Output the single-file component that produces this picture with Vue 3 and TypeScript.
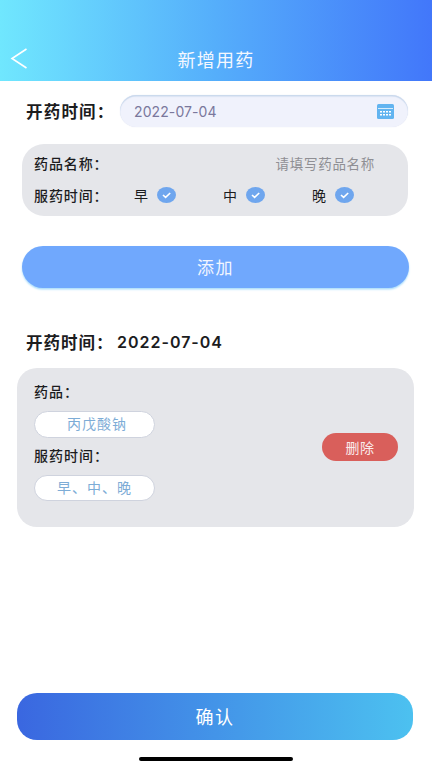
<script setup lang="ts">
const slots = ['早', '中', '晚']
</script>

<template>
  <div class="page">
    <header class="nav">
      <svg class="back" width="18" height="24" viewBox="0 0 18 24" fill="none">
        <path d="M16.5 2 L2 11.5 L16.5 21" stroke="#fff" stroke-width="1.6" />
      </svg>
      <span class="nav-title">新增用药</span>
    </header>

    <section class="date-row">
      <span class="date-label">开药时间：</span>
      <div class="date-input">
        <span class="date-value">2022-07-04</span>
        <svg width="17" height="15" viewBox="0 0 17 15">
          <rect x="0" y="0" width="17" height="15" rx="1.5" fill="#62b4f0" />
          <rect x="1" y="4" width="15" height="1" fill="#fff" opacity=".75" />
          <g fill="#fff">
            <rect x="3" y="7" width="2" height="1.5" /><rect x="6" y="7" width="2" height="1.5" /><rect x="9" y="7" width="2" height="1.5" /><rect x="12" y="7" width="2" height="1.5" />
            <rect x="3" y="10" width="2" height="1.5" /><rect x="6" y="10" width="2" height="1.5" /><rect x="9" y="10" width="2" height="1.5" /><rect x="12" y="10" width="2" height="1.5" />
          </g>
        </svg>
      </div>
    </section>

    <section class="form-card">
      <div class="form-line">
        <span class="form-label">药品名称：</span>
        <span class="placeholder">请填写药品名称</span>
      </div>
      <div class="form-line">
        <span class="form-label">服药时间：</span>
        <div class="slots">
          <div v-for="s in slots" :key="s" class="slot">
            <span>{{ s }}</span>
            <svg width="19" height="16" viewBox="0 0 19 16">
              <ellipse cx="9.5" cy="8" rx="9.5" ry="8" fill="#6fa6ee" />
              <path d="M6 8 L8.6 10.4 L13.2 6" stroke="#fff" stroke-width="1.6" fill="none" />
            </svg>
          </div>
        </div>
      </div>
    </section>

    <button class="add-btn">添加</button>

    <div class="record-date">
      <span class="record-key">开药时间：</span><span class="record-value">2022-07-04</span>
    </div>

    <section class="record-card">
      <div class="record-info">
        <div class="record-label">药品：</div>
        <div class="pill pill-drug">丙戊酸钠</div>
        <div class="record-label second">服药时间：</div>
        <div class="pill pill-time">早、中、晚</div>
      </div>
      <button class="del-btn">删除</button>
    </section>

    <div class="spacer"></div>
    <button class="confirm-btn">确认</button>
    <div class="home-bar"></div>
  </div>
</template>

<style>
body { margin: 0; background: #fff; }
</style>

<style scoped>
.page {
  width: 432px;
  height: 768px;
  display: flex;
  flex-direction: column;
  overflow: hidden;
  font-family: "Noto Sans CJK SC", "Liberation Sans", sans-serif;
  background: #fff;
  color: #1c1c1e;
}
.nav {
  height: 81px;
  flex: none;
  box-sizing: border-box;
  padding: 47px 0 0 10px;
  position: relative;
  background: linear-gradient(90deg, #70e7fe 0%, #55aefb 50%, #4277fa 100%);
}
.back { display: block; }
.nav-title {
  position: absolute;
  left: 0;
  right: 0;
  top: 47px;
  text-align: center;
  font-size: 18px;
  line-height: 25px;
  letter-spacing: 1.2px;
  color: #f4f8ff;
}
.date-row {
  display: flex;
  align-items: center;
  margin: 14px 24px 0 26px;
}
.date-label {
  width: 94px;
  flex: none;
  font-size: 16.5px;
  font-weight: 700;
  letter-spacing: 1.2px;
  line-height: 32px;
  white-space: nowrap;
}
.date-input {
  flex: 1;
  height: 32px;
  box-sizing: border-box;
  padding: 0 14px;
  display: flex;
  align-items: center;
  justify-content: space-between;
  background: #f0f2fc;
  border-radius: 16px;
  box-shadow: inset 0 1.5px 1px #c9d8ec, 0 0 1px #d8dcec;
}
.date-value {
  font-family: Inter, sans-serif;
  font-size: 14px;
  color: #7a789c;
  letter-spacing: .1px;
}
.form-card {
  margin: 17px 24px 0 22px;
  height: 72px;
  box-sizing: border-box;
  padding: 3px 12px;
  background: #e5e6ea;
  border-radius: 22px;
}
.form-line {
  height: 32px;
  display: flex;
  align-items: center;
  justify-content: space-between;
}
.form-label {
  width: 100px;
  flex: none;
  font-size: 14px;
  font-weight: 500;
  letter-spacing: .9px;
  white-space: nowrap;
}
.placeholder {
  margin-right: 21px;
  font-size: 13.5px;
  letter-spacing: .7px;
  color: #8f8f94;
}
.slots {
  flex: 1;
  display: flex;
}
.slot {
  width: 89px;
  display: flex;
  align-items: center;
  gap: 9px;
  font-size: 14px;
}
.add-btn {
  display: block;
  margin: 30px 23px 0 22px;
  width: 387px;
  height: 42px;
  flex: none;
  padding: 0 0 2px;
  border: 0;
  border-radius: 21px;
  background: #70a8fd;
  box-shadow: 0 1.5px 2px #a9dcfb;
  color: #f2f6ff;
  font-family: inherit;
  font-size: 17px;
  letter-spacing: 1.5px;
}
.record-date {
  margin: 42px 0 0 26px;
  display: flex;
  align-items: center;
  height: 24px;
  letter-spacing: 1px;
}
.record-key {
  width: 91px;
  flex: none;
  font-size: 16.5px;
  font-weight: 700;
  white-space: nowrap;
}
.record-value {
  font-family: Inter, sans-serif;
  font-size: 16px;
  font-weight: 600;
  letter-spacing: 1px;
}
.record-card {
  margin: 14px 18px 0 17px;
  height: 159px;
  box-sizing: border-box;
  padding: 14px 16px 0 17px;
  flex: none;
  display: flex;
  align-items: center;
  justify-content: space-between;
  background: #e5e6ea;
  border-radius: 20px;
}
.record-info { align-self: flex-start; }
.record-label {
  height: 18px;
  line-height: 18px;
  font-size: 14px;
  font-weight: 500;
  letter-spacing: 1px;
}
.record-label.second { margin-top: 8px; }
.pill {
  width: 121px;
  height: 27px;
  margin-top: 11px;
  box-sizing: border-box;
  border: 1px solid #cfd3de;
  border-radius: 14px;
  background: #fff;
  text-align: center;
  line-height: 23px;
  font-size: 14px;
  letter-spacing: 1px;
  color: #7dacd6;
}
.pill-drug { padding-left: 5px; }
.pill-time { height: 26px; }
.del-btn {
  width: 76px;
  height: 28px;
  margin-top: -15px;
  padding: 0 0 1px;
  border: 0;
  border-radius: 14px;
  background: #d95f5b;
  color: #f9ecec;
  font-family: inherit;
  font-size: 14px;
  letter-spacing: .5px;
}
.spacer { flex: 1; }
.confirm-btn {
  display: block;
  margin: 0 19px 17px 17px;
  width: 396px;
  height: 47px;
  flex: none;
  padding: 0 0 2px;
  border: 0;
  border-radius: 20px;
  background: linear-gradient(90deg, #3a67e0 0%, #4cc1f0 100%);
  color: #fff;
  font-family: inherit;
  font-size: 18px;
  letter-spacing: 1.5px;
}
.home-bar {
  width: 154px;
  height: 4px;
  flex: none;
  margin: 0 auto 7px;
  border-radius: 2px;
  background: #000;
}
</style>
